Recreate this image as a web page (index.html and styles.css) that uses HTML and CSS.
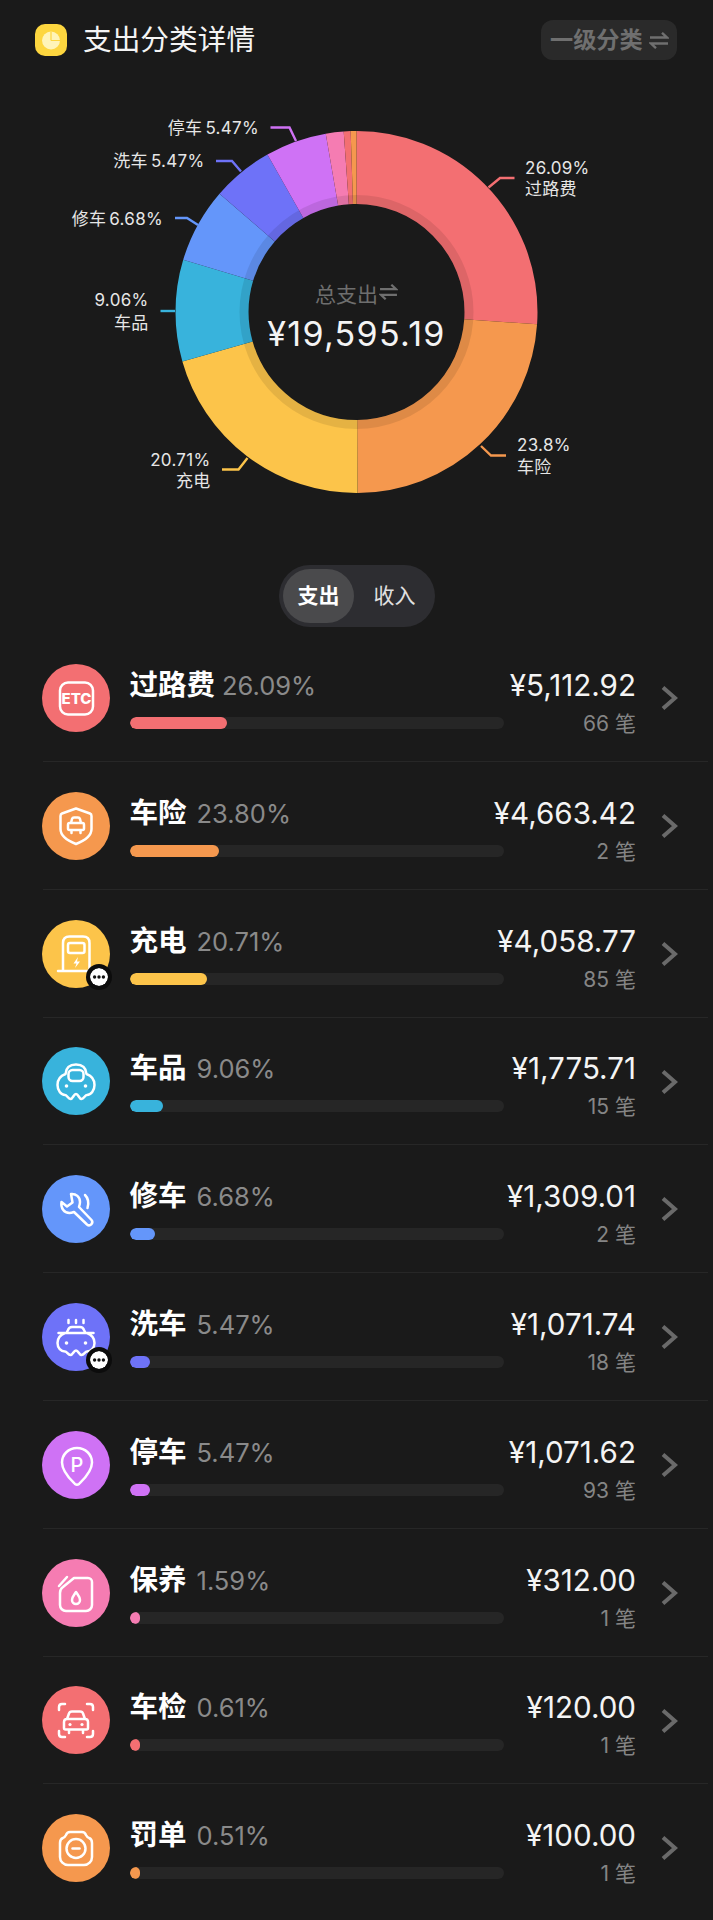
FILE: index.html
```html
<!DOCTYPE html>
<html lang="zh">
<head>
<meta charset="utf-8">
<title>支出分类详情</title>
<link rel="stylesheet" href="styles.css">
</head>
<body>
<svg class="defs" width="0" height="0" aria-hidden="true">
  <symbol id="swap" viewBox="0 0 20 17"><path d="M1 5.5H18L13 .8M19 11.5H2L7 16.2"/></symbol>
  <symbol id="chev" viewBox="0 0 18 26"><path d="M3 2.5L15 13L3 23.5"/></symbol>
  <symbol id="dots" viewBox="0 0 18 18"><circle cx="9" cy="9" r="9" fill="#fff"/><circle cx="4.6" cy="9" r="1.7" fill="#111"/><circle cx="9" cy="9" r="1.7" fill="#111"/><circle cx="13.4" cy="9" r="1.7" fill="#111"/></symbol>
</svg>

<header class="top">
  <div class="title-wrap">
    <svg class="logo" viewBox="0 0 32 32"><rect width="32" height="32" rx="10" fill="#fdd63f"/><circle cx="16" cy="16.500" r="9" fill="#fff4b8"/><path d="M16 16.500V7.500M16 16.500H25" stroke="#fdd63f" stroke-width="1.200" fill="none"/></svg>
    <h1 class="page-title">支出分类详情</h1>
  </div>
  <div class="level-btn">一级分类<svg class="swap swap-lg"><use href="#swap"/></svg></div>
</header>

<section class="chart-wrap">
  <svg class="chart" viewBox="0 78 713 480" width="713" height="480">
    <g class="ring" transform="rotate(-90 356.500 312)">
      <circle cx="356.500" cy="312" r="144.500" pathLength="100" stroke="#f36f72" stroke-dasharray="26.09 100" stroke-dashoffset="0"/>
      <circle cx="356.500" cy="312" r="144.500" pathLength="100" stroke="#f5984e" stroke-dasharray="23.8 100" stroke-dashoffset="-26.09"/>
      <circle cx="356.500" cy="312" r="144.500" pathLength="100" stroke="#fcc44a" stroke-dasharray="20.71 100" stroke-dashoffset="-49.89"/>
      <circle cx="356.500" cy="312" r="144.500" pathLength="100" stroke="#38b3dc" stroke-dasharray="9.06 100" stroke-dashoffset="-70.6"/>
      <circle cx="356.500" cy="312" r="144.500" pathLength="100" stroke="#6496fa" stroke-dasharray="6.68 100" stroke-dashoffset="-79.66"/>
      <circle cx="356.500" cy="312" r="144.500" pathLength="100" stroke="#6e72f8" stroke-dasharray="5.47 100" stroke-dashoffset="-86.34"/>
      <circle cx="356.500" cy="312" r="144.500" pathLength="100" stroke="#cf72f5" stroke-dasharray="5.47 100" stroke-dashoffset="-91.81"/>
      <circle cx="356.500" cy="312" r="144.500" pathLength="100" stroke="#f57cb2" stroke-dasharray="1.59 100" stroke-dashoffset="-97.28"/>
      <circle cx="356.500" cy="312" r="144.500" pathLength="100" stroke="#f36f72" stroke-dasharray="0.61 100" stroke-dashoffset="-98.87"/>
      <circle cx="356.500" cy="312" r="144.500" pathLength="100" stroke="#f5984e" stroke-dasharray="0.52 100" stroke-dashoffset="-99.48"/>
    </g>
    <circle class="ring-shade" cx="356.500" cy="312" r="112.500"/>
    <g class="leaders">
      <path stroke="#f36f72" d="M514.500 178H500L488.500 187.500"/>
      <path stroke="#f5984e" d="M506 455.500H491L481 446"/>
      <path stroke="#fcc44a" d="M222 469.500H238.500L247.500 458"/>
      <path stroke="#38b3dc" d="M160.500 311H175"/>
      <path stroke="#6496fa" d="M175 218H187L198 225"/>
      <path stroke="#6e72f8" d="M216 161H232L241 171.500"/>
      <path stroke="#cf72f5" d="M270.500 127.500H289.500L296 141"/>
    </g>
    <text class="lbl" x="525" y="174">26.09%</text>
    <text class="lbl" x="525" y="195">过路费</text>
    <text class="lbl" x="517" y="451">23.8%</text>
    <text class="lbl" x="517" y="473">车险</text>
    <text class="lbl end" x="210.500" y="465.500">20.71%</text>
    <text class="lbl end" x="210.500" y="486.500">充电</text>
    <text class="lbl end" x="148.500" y="306">9.06%</text>
    <text class="lbl end" x="148.500" y="328.500">车品</text>
    <text class="lbl end" x="163" y="225">修车 6.68%</text>
    <text class="lbl end" x="204.500" y="167">洗车 5.47%</text>
    <text class="lbl end" x="259" y="134">停车 5.47%</text>
    <text class="total-label end" x="378" y="301.500">总支出</text>
    <use href="#swap" class="swap swap-sm" x="379" y="284" width="19" height="16"/>
    <text class="total-value mid" x="356.500" y="346">¥19,595.19</text>
  </svg>
</section>

<div class="seg-wrap">
  <div class="seg">
    <span class="seg-item on">支出</span>
    <span class="seg-item">收入</span>
  </div>
</div>

<ul class="list">
  <li class="row">
    <div class="ico" style="background:#f36f72">
      <svg viewBox="0 0 68 68"><rect x="18" y="18.500" width="33" height="32" rx="8"/><text class="etc" x="34.500" y="40">ETC</text></svg>
    </div>
    <div class="main">
      <div class="head head-tight"><span class="name">过路费</span><span class="pct">26.09%</span></div>
      <div class="track"><div class="fill" style="width:26.09%;background:#f36f72"></div></div>
    </div>
    <div class="amt"><div class="money">¥5,112.92</div><div class="count">66 笔</div></div>
    <svg class="chev"><use href="#chev"/></svg>
  </li>
  <li class="row">
    <div class="ico" style="background:#f5984e">
      <svg viewBox="0 0 68 68"><path d="M34 16.500L48 21.500Q49.500 22 49.500 24V37Q49.500 46 34 52Q18.500 46 18.500 37V24Q18.500 22 20 21.500Z"/><path d="M29 31L30 27Q30.500 25.500 32 25.500H36Q37.500 25.500 38 27L39 31M27.500 31H40.500Q42 31 42 33V36.500Q42 38 40.500 38H27.500Q26 38 26 36.500V33Q26 31 27.500 31ZM29.500 38V41M38.500 38V41"/></svg>
    </div>
    <div class="main">
      <div class="head"><span class="name">车险</span><span class="pct">23.80%</span></div>
      <div class="track"><div class="fill" style="width:23.8%;background:#f5984e"></div></div>
    </div>
    <div class="amt"><div class="money">¥4,663.42</div><div class="count">2 笔</div></div>
    <svg class="chev"><use href="#chev"/></svg>
  </li>
  <li class="row">
    <div class="ico" style="background:#fcc44a">
      <svg viewBox="0 0 68 68"><path d="M21 51V23Q21 16.500 27.500 16.500H41Q47.500 16.500 47.500 23V51M16 51H50"/><rect x="26" y="23" width="16.500" height="10" rx="2"/><path class="solid" d="M36 37L31.500 43.500H34.500L33 48L38 41.500H35Z"/></svg>
      <svg class="badge"><use href="#dots"/></svg>
    </div>
    <div class="main">
      <div class="head"><span class="name">充电</span><span class="pct">20.71%</span></div>
      <div class="track"><div class="fill" style="width:20.71%;background:#fcc44a"></div></div>
    </div>
    <div class="amt"><div class="money">¥4,058.77</div><div class="count">85 笔</div></div>
    <svg class="chev"><use href="#chev"/></svg>
  </li>
  <li class="row">
    <div class="ico" style="background:#38b3dc">
      <svg viewBox="0 0 68 68"><path d="M34 17.500C27 17.500 24 20.500 23.500 27C18 29 15.500 33 15.500 38C15.500 43.500 19 48 23 48C25 48 26 52 28.500 52C31 52 31.500 47 34 47C36.500 47 37 52 39.500 52C42 52 43 48 45 48C49 48 52.500 43.500 52.500 38C52.500 33 50 29 44.500 27C44 20.500 41 17.500 34 17.500Z"/><rect x="26.500" y="23" width="15" height="11" rx="4"/><circle class="solid" cx="24.500" cy="39" r="1.800"/><circle class="solid" cx="43.500" cy="39" r="1.800"/></svg>
    </div>
    <div class="main">
      <div class="head"><span class="name">车品</span><span class="pct">9.06%</span></div>
      <div class="track"><div class="fill" style="width:9.06%;background:#38b3dc"></div></div>
    </div>
    <div class="amt"><div class="money">¥1,775.71</div><div class="count">15 笔</div></div>
    <svg class="chev"><use href="#chev"/></svg>
  </li>
  <li class="row">
    <div class="ico" style="background:#6496fa">
      <svg viewBox="0 0 68 68"><path d="M29 19C34 18.500 38 22 38 27C38 29 37.500 30.500 37 32L49.500 45A3.200 3.200 0 0 1 45 49.500L32 37C30.500 37.500 29 38 27.500 38C22 38 18.500 33 19.500 27L25 31.500L30.500 27.500L29 19Z"/><path d="M43 20C46 23 47 28 45.500 33"/></svg>
    </div>
    <div class="main">
      <div class="head"><span class="name">修车</span><span class="pct">6.68%</span></div>
      <div class="track"><div class="fill" style="width:6.68%;background:#6496fa"></div></div>
    </div>
    <div class="amt"><div class="money">¥1,309.01</div><div class="count">2 笔</div></div>
    <svg class="chev"><use href="#chev"/></svg>
  </li>
  <li class="row">
    <div class="ico" style="background:#6e72f8">
      <svg viewBox="0 0 68 68"><path d="M24.500 30L26 27Q27 24 30 24H38Q41 24 42 27L43.500 30M16.500 30H51.500M23 30C18 32 15.500 35 15.500 40C15.500 45 19 48.500 23 48.500C25 48.500 26 52 28.500 52C31 52 31.500 47.500 34 47.500C36.500 47.500 37 52 39.500 52C42 52 43 48.500 45 48.500C49 48.500 52.500 45 52.500 40C52.500 35 50 32 45 30"/><path d="M26.500 17V20M34 17V20M41.500 17V20"/><circle class="solid" cx="24.500" cy="40" r="1.800"/><circle class="solid" cx="43.500" cy="40" r="1.800"/></svg>
      <svg class="badge"><use href="#dots"/></svg>
    </div>
    <div class="main">
      <div class="head"><span class="name">洗车</span><span class="pct">5.47%</span></div>
      <div class="track"><div class="fill" style="width:5.47%;background:#6e72f8"></div></div>
    </div>
    <div class="amt"><div class="money">¥1,071.74</div><div class="count">18 笔</div></div>
    <svg class="chev"><use href="#chev"/></svg>
  </li>
  <li class="row">
    <div class="ico" style="background:#cf72f5">
      <svg viewBox="0 0 68 68"><path d="M35 17C26.500 17 20 23.500 20 31.500C20 41 29 49 33 53Q35 54.500 37 53C41 49 50 41 50 31.500C50 23.500 43.500 17 35 17Z"/><text class="pin" x="35" y="40.500">P</text></svg>
    </div>
    <div class="main">
      <div class="head"><span class="name">停车</span><span class="pct">5.47%</span></div>
      <div class="track"><div class="fill" style="width:5.47%;background:#cf72f5"></div></div>
    </div>
    <div class="amt"><div class="money">¥1,071.62</div><div class="count">93 笔</div></div>
    <svg class="chev"><use href="#chev"/></svg>
  </li>
  <li class="row">
    <div class="ico" style="background:#f57cb2">
      <svg viewBox="0 0 68 68"><path d="M32 19H46A4 4 0 0 1 50 23V46A6 6 0 0 1 44 52H24A6 6 0 0 1 18 46V34Q18 30 21 28Z"/><path d="M17 27L25 18"/><path d="M34 33C32 36 30 38 30 41A4 4 0 0 0 38 41C38 38 36 36 34 33Z"/></svg>
    </div>
    <div class="main">
      <div class="head"><span class="name">保养</span><span class="pct">1.59%</span></div>
      <div class="track"><div class="fill" style="width:1.59%;background:#f57cb2"></div></div>
    </div>
    <div class="amt"><div class="money">¥312.00</div><div class="count">1 笔</div></div>
    <svg class="chev"><use href="#chev"/></svg>
  </li>
  <li class="row">
    <div class="ico" style="background:#f36f72">
      <svg viewBox="0 0 68 68"><path d="M17 24V21Q17 18 20 18H23M45 18H48Q51 18 51 21V24M51 45V48Q51 51 48 51H45M23 51H20Q17 51 17 48V45"/><path d="M25 33L27 27.500Q27.500 25.500 30 25.500H38Q40.500 25.500 41 27.500L43 33M25 33H43Q46 33 46 36V42Q46 43.500 44.500 43.500H23.500Q22 43.500 22 42V36Q22 33 25 33ZM27 43.500V47M41 43.500V47"/><circle class="solid" cx="28" cy="38.500" r="1.600"/><circle class="solid" cx="40" cy="38.500" r="1.600"/></svg>
    </div>
    <div class="main">
      <div class="head"><span class="name">车检</span><span class="pct">0.61%</span></div>
      <div class="track"><div class="fill" style="width:0.61%;background:#f36f72"></div></div>
    </div>
    <div class="amt"><div class="money">¥120.00</div><div class="count">1 笔</div></div>
    <svg class="chev"><use href="#chev"/></svg>
  </li>
  <li class="row">
    <div class="ico" style="background:#f5984e">
      <svg viewBox="0 0 68 68"><path d="M28 18H40Q43 18 44 21Q45 23 47 24Q50 25 50 29V43A8 8 0 0 1 42 51H26A8 8 0 0 1 18 43V29Q18 25 21 24Q23 23 24 21Q25 18 28 18Z"/><circle cx="34" cy="34.500" r="9.500"/><path d="M30.500 34.500H37.500"/></svg>
    </div>
    <div class="main">
      <div class="head"><span class="name">罚单</span><span class="pct">0.51%</span></div>
      <div class="track"><div class="fill" style="width:0.51%;background:#f5984e"></div></div>
    </div>
    <div class="amt"><div class="money">¥100.00</div><div class="count">1 笔</div></div>
    <svg class="chev"><use href="#chev"/></svg>
  </li>
</ul>
</body>
</html>
```
FILE: styles.css
```css
* { box-sizing: border-box; }
html, body { margin: 0; padding: 0; background: #1a1a1a; }
body {
  width: 713px;
  height: 1920px;
  overflow: hidden;
  color: #fff;
  font-family: "Inter", "Noto Sans CJK SC", sans-serif;
}
.defs { position: absolute; }

.top {
  height: 78px;
  padding: 20px 36px 18px 35px;
  display: flex;
  align-items: flex-start;
  justify-content: space-between;
}
.title-wrap { display: flex; align-items: center; gap: 16px; height: 38px; margin-top: 1px; }
.logo { width: 32px; height: 32px; margin-top: -1px; }
.page-title {
  margin: 0;
  font-size: 28.7px;
  font-weight: 400;
  line-height: 38px;
  color: #f4f4f4;
}
.level-btn {
  width: 136px;
  height: 40px;
  padding-left: 9px;
  border-radius: 12px;
  background: #2a2a2a;
  color: #6f6f6f;
  font-size: 23.2px;
  font-weight: 700;
  line-height: 40px;
  display: flex;
  align-items: center;
  gap: 6px;
}
.swap { fill: none; stroke: #6f6f6f; stroke-width: 2.4; }
.swap-lg { width: 20px; height: 17px; }

.chart-wrap { height: 480px; }
.chart { display: block; }
.ring circle { fill: none; stroke-width: 73; }
.ring-shade { fill: none; stroke: #000; stroke-opacity: .09; stroke-width: 9; }
.leaders path { fill: none; stroke-width: 2.4; }
.lbl { font-size: 17px; fill: #e6e6e6; letter-spacing: .3px; word-spacing: -2px; }
.end { text-anchor: end; }
.mid { text-anchor: middle; }
.total-label { font-size: 21px; fill: #6e6e6e; }
.total-value { font-size: 34px; fill: #f4f4f4; letter-spacing: 1.3px; }

.seg-wrap { display: flex; justify-content: center; padding-top: 7px; }
.seg {
  width: 156px;
  height: 62px;
  margin-left: 1px;
  padding: 4px;
  border-radius: 31px;
  background: #2d2d31;
  display: flex;
}
.seg-item {
  flex: 1;
  text-align: center;
  line-height: 54px;
  font-size: 21px;
  color: #e0e0e0;
  border-radius: 27px;
}
.seg-item.on { flex: 0 0 71px; background: #4a4a4c; color: #fff; font-weight: 700; }
.seg-item:last-child { padding-left: 4px; }

.list { list-style: none; margin: 7.3px 5px 0 43px; padding: 0; }
.row {
  height: 127.8px;
  display: flex;
  align-items: flex-start;
  border-bottom: 1px solid #272727;
}
.row:last-child { border-bottom: 0; }
.ico {
  position: relative;
  flex: none;
  width: 68px;
  height: 68px;
  margin: 29.7px 0 0 -1.5px;
  border-radius: 50%;
}
.ico > svg:first-child { display: block; width: 68px; height: 68px; fill: none; stroke: #fff; stroke-width: 2.5; stroke-linejoin: round; stroke-linecap: round; }
.ico .solid { fill: #fff; stroke: none; }
.etc, .pin {
  fill: #fff;
  stroke: none;
  text-anchor: middle;
}
.etc { font-size: 15px; font-weight: 800; }
.pin { font-size: 20px; font-weight: 500; }
.badge {
  position: absolute;
  left: 44.5px;
  top: 44.5px;
  width: 26px;
  height: 26px;
  padding: 4px;
  border-radius: 50%;
  background: #0c0c0c;
}

.main { flex: none; width: 374.5px; margin: 32.7px 0 0 20px; }
.head { height: 36px; line-height: 36px; display: flex; align-items: baseline; gap: 10px; white-space: nowrap; }
.head-tight { gap: 7px; }
.name { font-size: 28.5px; font-weight: 700; color: #fff; }
.pct { font-size: 25.5px; color: #8a8a8a; }
.track { height: 12px; margin-top: 14px; border-radius: 6px; background: #262626; overflow: hidden; }
.fill { height: 12px; min-width: 10px; border-radius: 6px; }

.amt { flex: none; width: 172px; margin: 32.7px 0 0 -40px; text-align: right; white-space: nowrap; }
.money { height: 36px; line-height: 36px; font-size: 29.6px; color: #f4f4f4; }
.count { height: 24px; margin-top: 9px; line-height: 24px; font-size: 21px; color: #858585; }
.chev {
  flex: none;
  width: 18px;
  height: 26px;
  margin: 51px 0 0 24px;
  fill: none;
  stroke: #6a6a6a;
  stroke-width: 4;
}
```
